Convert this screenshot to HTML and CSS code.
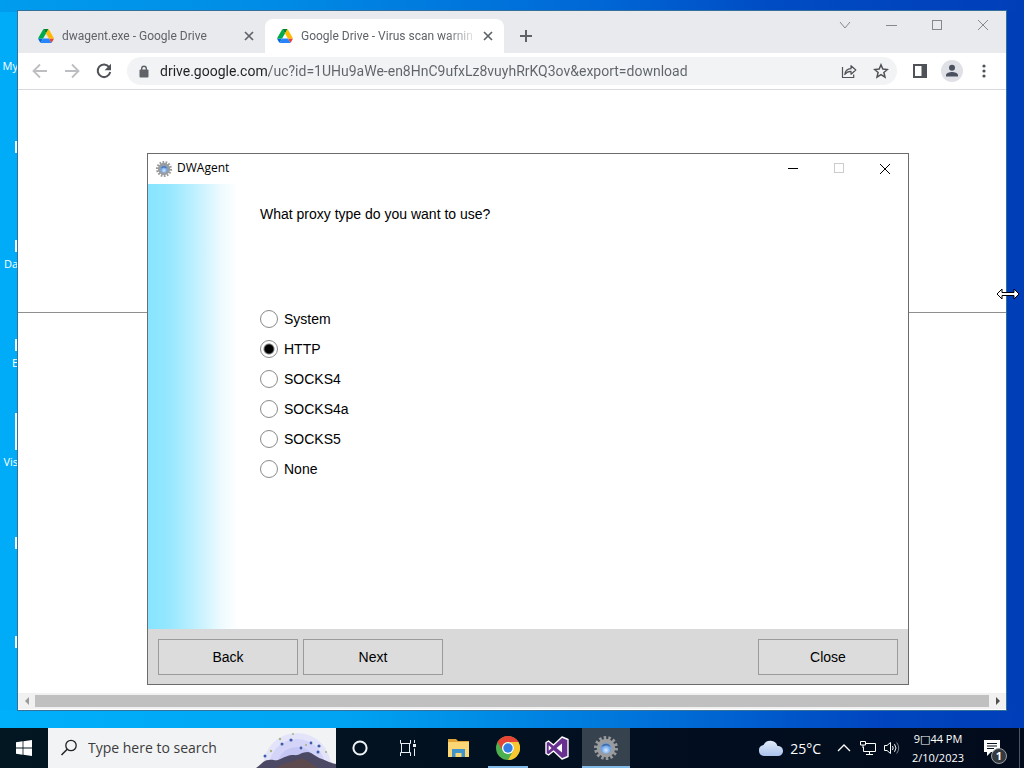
FILE: index.html
```
<!DOCTYPE html>
<html lang="en">
<head>
<meta charset="utf-8">
<title>Desktop</title>
<link rel="stylesheet" href="styles.css">
</head>
<body>
<svg class="defs" aria-hidden="true">
  <defs>
    <radialGradient id="hub" cx="50%" cy="65%" r="60%">
      <stop offset="0" stop-color="#d8eaff"/>
      <stop offset=".5" stop-color="#6aa2e6"/>
      <stop offset="1" stop-color="#8b98a8"/>
    </radialGradient>
    <linearGradient id="cloudfill" x1="0" y1="0" x2="0" y2="1">
      <stop offset="0" stop-color="#e3edfb"/>
      <stop offset="1" stop-color="#a9c1ec"/>
    </linearGradient>
    <symbol id="gear" viewBox="0 0 24 24">
      <circle cx="12" cy="12" r="10" fill="none" stroke="#98999a" stroke-width="4" pathLength="28" stroke-dasharray="1.100 .9"/>
      <circle cx="12" cy="12" r="7.400" fill="url(#hub)" stroke="#9a9c9e" stroke-width="3.600"/>
      <path d="M7.500 11a4.800 4.800 0 0 1 9 0c-2-1.600-3-1-4.500-1.800C10.500 10 9.500 9.500 7.500 11z" fill="#3f6aa8"/>
    </symbol>
    <symbol id="drive" viewBox="0 0 87.3 78">
      <path d="m6.600 66.850 3.850 6.650c.8 1.400 1.950 2.500 3.300 3.300l13.750-23.800h-27.500c0 1.550.4 3.100 1.200 4.500z" fill="#0066da"/>
      <path d="m43.650 25-13.750-23.800c-1.350.8-2.500 1.900-3.300 3.300l-25.400 44a9.060 9.060 0 0 0-1.200 4.500h27.500z" fill="#00ac47"/>
      <path d="m73.550 76.800c1.350-.8 2.500-1.900 3.300-3.300l1.600-2.750 7.650-13.250c.8-1.400 1.200-2.950 1.200-4.500h-27.500l5.850 11.500z" fill="#ea4335"/>
      <path d="m43.650 25 13.750-23.800c-1.350-.8-2.900-1.200-4.500-1.200h-18.500c-1.600 0-3.150.45-4.500 1.200z" fill="#00832d"/>
      <path d="m59.800 53h-32.300l-13.750 23.800c1.350.8 2.900 1.200 4.500 1.200h50.800c1.600 0 3.150-.45 4.500-1.200z" fill="#2684fc"/>
      <path d="m73.400 26.500-12.700-22c-.8-1.400-1.950-2.500-3.300-3.300l-13.750 23.800 16.150 28h27.450c0-1.550-.4-3.100-1.200-4.500z" fill="#ffba00"/>
    </symbol>
    <symbol id="cross" viewBox="0 0 12 12">
      <path d="M1 1l10 10M11 1L1 11" fill="none" stroke="currentColor"/>
    </symbol>
    <symbol id="tabcross" viewBox="0 0 16 16">
      <path d="M4 4l8 8M12 4l-8 8" fill="none" stroke="currentColor" stroke-width="1.700"/>
    </symbol>
  </defs>
</svg>

<div class="screen">
  <main class="desktop">
    <ul class="shortcuts" aria-label="Shortcuts">
      <li>My</li>
      <li class="marked"></li>
      <li class="marked">Da</li>
      <li class="marked">E</li>
      <li class="marked tall">Vis</li>
      <li class="marked"></li>
      <li class="marked"></li>
    </ul>

    <section class="browser" aria-label="Browser">
      <header class="tabstrip">
        <div class="tab">
          <svg class="favicon"><use href="#drive"/></svg>
          <span class="tab-title">dwagent.exe - Google Drive</span>
          <button class="tab-close" aria-label="Close tab"><svg><use href="#tabcross"/></svg></button>
        </div>
        <div class="tab active">
          <svg class="favicon"><use href="#drive"/></svg>
          <span class="tab-title">Google Drive - Virus scan warnin</span>
          <button class="tab-close" aria-label="Close tab"><svg><use href="#tabcross"/></svg></button>
        </div>
        <button class="new-tab" aria-label="New tab"><svg viewBox="0 0 14 14"><path d="M7 1v12M1 7h12" stroke="currentColor" stroke-width="2"/></svg></button>
        <div class="win-buttons">
          <button aria-label="Search tabs"><svg viewBox="0 0 12 12"><path d="M1 3l5 6 5-6" fill="none" stroke="currentColor"/></svg></button>
          <button aria-label="Minimize"><svg viewBox="0 0 12 12"><path d="M1 6.500h11" stroke="currentColor"/></svg></button>
          <button aria-label="Maximize"><svg viewBox="0 0 12 12"><rect x="1.500" y="1.500" width="9" height="9" fill="none" stroke="currentColor"/></svg></button>
          <button aria-label="Close"><svg><use href="#cross"/></svg></button>
        </div>
      </header>

      <div class="toolbar">
        <button class="tool faint" aria-label="Back"><svg viewBox="0 0 16 16"><path d="M15 8H2M8 1.500L1.500 8 8 14.500" fill="none" stroke="currentColor" stroke-width="1.800"/></svg></button>
        <button class="tool faint" aria-label="Forward"><svg viewBox="0 0 16 16"><path d="M1 8h13M8 1.500L14.500 8 8 14.500" fill="none" stroke="currentColor" stroke-width="1.800"/></svg></button>
        <button class="tool" aria-label="Reload"><svg viewBox="0 0 16 16"><path d="M13.200 4.200A6.300 6.300 0 1 0 14.200 9" fill="none" stroke="currentColor" stroke-width="2"/><path d="M15 .8v6.400H8.600z" fill="currentColor"/></svg></button>
        <div class="omnibox">
          <svg class="lock" viewBox="0 0 10 13"><path d="M2.700 5V3.500a2.300 2.300 0 0 1 4.600 0V5" fill="none" stroke="#5f6368" stroke-width="1.400"/><rect x=".5" y="4.500" width="9" height="8" rx="1" fill="#5f6368"/></svg>
          <input class="url" type="text" aria-label="Address" value="drive.google.com/uc?id=1UHu9aWe-en8HnC9ufxLz8vuyhRrKQ3ov&amp;export=download">
          <button class="tool" aria-label="Share"><svg viewBox="0 0 16 16"><path d="M1.500 4v10.500h11.200V11.500M3.800 11.500C4.200 7.800 6.500 5.900 10 5.700V2.700L14.800 7 10 11.200V8.400C7 8.400 5.300 9.400 3.800 11.500z" fill="none" stroke="currentColor" stroke-width="1.200" stroke-linejoin="round"/></svg></button>
          <button class="tool" aria-label="Bookmark"><svg viewBox="0 0 16 16"><path d="M8 1.800l1.800 4.300 4.600.4-3.500 3 1.100 4.600L8 11.700l-4 2.400 1.100-4.600-3.500-3 4.600-.4z" fill="none" stroke="currentColor" stroke-width="1.500"/></svg></button>
        </div>
        <button class="tool" aria-label="Side panel"><svg viewBox="0 0 16 16"><path d="M1 1h14v14H1zM3 3v10h6.500V3z" fill="currentColor" fill-rule="evenodd"/></svg></button>
        <button class="tool" aria-label="Profile"><svg class="avatar" viewBox="0 0 22 22"><circle cx="11" cy="11" r="11" fill="#dfe1e7"/><circle cx="11" cy="7.800" r="3" fill="#4c5160"/><path d="M5 16.600v-1.500c0-2.100 3.500-3.200 6-3.200s6 1.100 6 3.200v1.500z" fill="#4c5160"/></svg></button>
        <button class="tool" aria-label="Menu"><svg viewBox="0 0 16 16"><g fill="currentColor"><circle cx="8" cy="3" r="1.600"/><circle cx="8" cy="8" r="1.600"/><circle cx="8" cy="13" r="1.600"/></g></svg></button>
      </div>

      <div class="page"><hr class="rule"></div>

      <div class="scrollbar">
        <button class="scroll-end faint" aria-label="Scroll left"><svg viewBox="0 0 8 8"><path d="M6 0v8L2 4z" fill="currentColor"/></svg></button>
        <div class="thumb"></div>
        <button class="scroll-end" aria-label="Scroll right"><svg viewBox="0 0 8 8"><path d="M2 0v8l4-4z" fill="currentColor"/></svg></button>
      </div>
    </section>

    <section class="dialog" aria-label="DWAgent">
      <header class="dialog-bar">
        <svg class="app-icon"><use href="#gear"/></svg>
        <h1 class="dialog-title">DWAgent</h1>
        <div class="dialog-buttons">
          <button aria-label="Minimize"><svg viewBox="0 0 12 12"><path d="M1 5.500h10" stroke="currentColor"/></svg></button>
          <button class="off" aria-label="Maximize" disabled><svg viewBox="0 0 12 12"><rect x="1.500" y=".5" width="9" height="9" fill="none" stroke="currentColor"/></svg></button>
          <button aria-label="Close"><svg><use href="#cross"/></svg></button>
        </div>
      </header>
      <form class="dialog-body">
        <p class="question">What proxy type do you want to use?</p>
        <div class="options">
          <label class="option"><input type="radio" name="proxy">System</label>
          <label class="option"><input type="radio" name="proxy" checked>HTTP</label>
          <label class="option"><input type="radio" name="proxy">SOCKS4</label>
          <label class="option"><input type="radio" name="proxy">SOCKS4a</label>
          <label class="option"><input type="radio" name="proxy">SOCKS5</label>
          <label class="option"><input type="radio" name="proxy">None</label>
        </div>
      </form>
      <footer class="dialog-foot">
        <button class="action">Back</button>
        <button class="action">Next</button>
        <button class="action last">Close</button>
      </footer>
    </section>

    <svg class="pointer" viewBox="0 0 24 12" aria-hidden="true"><path d="M1 6l5-5v3.500h12V1l5 5-5 5V7.500H6V11z" fill="#fff" stroke="#000"/></svg>
  </main>

  <footer class="taskbar">
    <button class="task" aria-label="Start"><svg class="i16" viewBox="0 0 16 16"><path d="M0 2.200L6.600 1.300v6.200H0zM7.400 1.200L16 0v7.500H7.400zM0 8.400h6.600v6.300L0 13.800zM7.400 8.400H16V16l-8.600-1.200z" fill="#fff"/></svg></button>
    <div class="search">
      <svg class="lens" viewBox="0 0 18 18"><circle cx="11" cy="6.500" r="5.200" fill="none" stroke="#222" stroke-width="1.300"/><path d="M7.200 10.200L1.500 16" stroke="#222" stroke-width="1.500"/></svg>
      <input class="search-field" type="text" placeholder="Type here to search" aria-label="Search">
      <svg class="scene" viewBox="0 0 80 40" aria-hidden="true">
        <circle cx="41" cy="39" r="34" fill="#e3e4fa"/>
        <circle cx="41" cy="39" r="28" fill="#d3d4f8"/>
        <circle cx="41" cy="39" r="20" fill="#c5c6f4"/>
        <path d="M0 40c5-3 7-8 13-8 4-1 5 1 9 0 7-3 10-5 16-5 5 1 7-3 14-3 5 1 8 5 14 7 5 2 9 4 14 5v4z" fill="#4b4964"/>
        <path d="M20 40c8-6 18-6 26-10 5 3 10 5 16 10z" fill="#5d4a4e"/>
        <g fill="#3f5ca6"><circle cx="9" cy="28" r="1.500"/><circle cx="26" cy="16" r="1.500"/><circle cx="35" cy="12" r="1.600"/><circle cx="45" cy="20" r="1.400"/><circle cx="55" cy="15" r="1.400"/><circle cx="63" cy="18" r="1.600"/><circle cx="62" cy="24" r="1.500"/></g>
        <g fill="#a9b27c"><circle cx="15" cy="23" r="1.200"/><circle cx="24" cy="11" r="1.200"/><circle cx="37" cy="6" r="1"/><circle cx="70" cy="24" r="1"/><circle cx="50" cy="17" r="1"/></g>
      </svg>
    </div>
    <button class="task" aria-label="Cortana"><svg class="i16" viewBox="0 0 16 16"><circle cx="8" cy="8" r="6.600" fill="none" stroke="#eef4f8" stroke-width="2"/></svg></button>
    <button class="task" aria-label="Task view"><svg class="i16" viewBox="0 0 16 16"><path d="M.5 0v3.500h10V0M.5 16v-3.500h10V16M1.500 3.500v9M9.500 3.500v9M14.500 0v3M14.500 8.500V16" fill="none" stroke="#e8eef2"/><rect x="13" y="4" width="3" height="3" fill="#e8eef2"/></svg></button>
    <nav class="apps" aria-label="Apps">
      <button class="task" aria-label="File Explorer"><svg class="i24" viewBox="0 0 24 24"><path d="M1 3h8l2 2h11v5H1z" fill="#e0a437"/><path d="M1 6h21v15H1z" fill="#fbd675"/><path d="M5 21v-8h13v8h-3.500v-4h-6v4z" fill="#4094cc"/></svg></button>
      <button class="task running" aria-label="Chrome"><svg class="i24" viewBox="0 0 24 24"><circle cx="12" cy="12" r="12" fill="#4caf50"/><path d="M1.600 6A12 12 0 0 1 22.400 6H12a6 6 0 0 0-5.200 9z" fill="#e84435"/><path d="M22.400 6A12 12 0 0 1 12 24l5.200-9A6 6 0 0 0 12 6z" fill="#fbc72f"/><circle cx="12" cy="12" r="6" fill="#fff"/><circle cx="12" cy="12" r="4.700" fill="#347fe4"/></svg></button>
      <button class="task" aria-label="Visual Studio"><svg class="i24" viewBox="0 0 24 24"><path d="M17 1l6 2.500v17L17 23l-8.500-8L3.500 19 1 17.500v-11L3.500 5l5 4z" fill="#68318f" stroke="#fff" stroke-width="1.400" stroke-linejoin="round"/><path d="M17 7.500v9L11.500 12zM3.700 9.200v5.600L6.500 12z" fill="#fff"/></svg></button>
      <button class="task current" aria-label="DWAgent"><svg class="i24" viewBox="0 0 24 24"><use href="#gear"/></svg></button>
    </nav>
    <div class="tray">
      <button class="weather"><svg class="cloud" viewBox="0 0 26 16"><path d="M6 16a5.500 5.500 0 0 1-.5-10.900A7.500 7.500 0 0 1 19.500 6 5 5 0 0 1 20.500 16z" fill="url(#cloudfill)"/></svg>25°C</button>
      <button class="tray-item" aria-label="Hidden icons"><svg class="i16" viewBox="0 0 16 16"><path d="M2 11l6-6 6 6" fill="none" stroke="#fff" stroke-width="1.300"/></svg></button>
      <button class="tray-item" aria-label="Network"><svg class="i16" viewBox="0 0 16 16"><path d="M6 3.500h9.500v8H3.500V7M9.500 11.500v3M6 14.500h7M.5 1.500h5V5h-5zM3 5v3" fill="none" stroke="#fff"/></svg></button>
      <button class="tray-item" aria-label="Volume"><svg class="i16" viewBox="0 0 16 16"><path d="M.5 5.500h2.500L6.500 2.500v11L3 10.500H.5zM8.500 6q1.400 2 0 4M10.500 4.200q3 3.800 0 7.600" fill="none" stroke="#fff"/><path d="M12.700 2.500q4 5.500 0 11" fill="none" stroke="#7d868c"/></svg></button>
      <button class="clock"><span>9<span class="sep">□</span>44 PM</span><span>2/10/2023</span></button>
      <button class="notices" aria-label="Notifications"><svg class="note" viewBox="0 0 18 18"><path d="M1 1h16v12H8l-4 4v-4H1z" fill="#fff"/><path d="M4 4.500h10M4 7h10M4 9.500h7" stroke="#07131c"/></svg><span class="count">1</span></button>
    </div>
  </footer>
</div>
</body>
</html>
```
FILE: styles.css
```
* { box-sizing: border-box; }

body {
  margin: 0;
  font-family: "Open Sans", "Noto Sans", sans-serif;
  font-size: 12px;
  color: #000;
}

button {
  display: flex;
  align-items: center;
  justify-content: center;
  margin: 0;
  padding: 0;
  border: 0;
  background: none;
  color: inherit;
  font: inherit;
}

input { margin: 0; font: inherit; }
svg { display: block; flex: none; }
.defs { position: absolute; width: 0; height: 0; }

.screen { display: flex; flex-direction: column; height: 100vh; overflow: hidden; }

/* Desktop */
.desktop {
  position: relative;
  flex: 1;
  overflow: hidden;
  background:
    linear-gradient(90deg, #00b0fa 0%, #00a4f2 33%, #0074da 62%, #0046c0 85%, #003eb8 100%) 0 100% / 100% 18px no-repeat,
    linear-gradient(90deg, #009cee 0%, #008ce6 26%, #0068d6 58%, #004cc4 75%, #003eb8 100%) 0 0 / 100% 12px no-repeat,
    linear-gradient(90deg, #00acf8 0%, #00a8f6 10%, #0040bc 90%, #003eb8 100%);
}

.shortcuts {
  width: 18px;
  margin: 0;
  padding: 58px 0 0;
  list-style: none;
  color: #fff;
  font-size: 11px;
  line-height: 16px;
  text-align: right;
}
.shortcuts li { display: flow-root; height: 99px; white-space: nowrap; }
.shortcuts li:first-child { height: 83px; }
.shortcuts .marked::before {
  content: "";
  display: block;
  width: 3px;
  height: 12px;
  margin: 0 0 4px auto;
  background: #eef8ff;
}
.shortcuts .tall::before { height: 37px; margin-top: -25px; }

/* Browser window */
.browser {
  position: absolute;
  inset: 10px 17px 17px 17px;
  display: flex;
  flex-direction: column;
  border: 1px solid #356f9c;
  background: #fff;
}

.tabstrip {
  display: flex;
  align-items: flex-end;
  height: 42px;
  padding-left: 8px;
  background: #e8eaed;
  color: #5f6368;
}
.tab {
  display: flex;
  align-items: center;
  gap: 8px;
  flex: 0 1 239px;
  min-width: 0;
  height: 34px;
  padding: 0 8px 0 12px;
  border-radius: 8px 8px 0 0;
}
.tab.active { background: #fff; }
.favicon { width: 16px; height: 14px; }
.tab-title {
  flex: 1;
  overflow: hidden;
  white-space: nowrap;
  font-family: Roboto, "Open Sans", sans-serif;
  line-height: 20px;
  mask-image: linear-gradient(90deg, #000 85%, rgba(0, 0, 0, .2) 100%);
}
.tab-close, .tab-close svg { width: 16px; height: 16px; }
.new-tab { width: 44px; height: 34px; }
.new-tab svg { width: 14px; height: 14px; }
.win-buttons { display: flex; align-self: flex-start; margin-left: auto; color: #85888c; }
.win-buttons button { width: 46px; height: 28px; }
.win-buttons svg { width: 12px; height: 12px; }

.toolbar {
  display: flex;
  align-items: center;
  height: 37px;
  padding: 0 6px;
  border-bottom: 1px solid #d8dadd;
  color: #4f5256;
}
.tool { width: 32px; height: 28px; }
.tool svg { width: 16px; height: 16px; }
.tool .avatar { width: 22px; height: 22px; }
.faint { color: #bcbec1; }
.omnibox {
  display: flex;
  align-items: center;
  flex: 1;
  min-width: 0;
  height: 28px;
  margin: 0 7px;
  padding-left: 12px;
  border-radius: 14px;
  background: #f1f3f4;
}
.lock { width: 10px; height: 13px; }
.url {
  flex: 1;
  min-width: 0;
  height: 24px;
  padding: 0;
  margin-left: 11px;
  border: 0;
  outline: 0;
  color: #5f6368;
  font-family: Roboto, "Open Sans", sans-serif;
  font-size: 14px;
  background: linear-gradient(90deg, #202124 109px, #5f6368 109px);
  background-clip: text;
  -webkit-background-clip: text;
  -webkit-text-fill-color: transparent;
}

.page { flex: 1; }
.rule { height: 1px; margin: 222px 0 0; border: 0; background: #8f8f8f; }

.scrollbar {
  display: flex;
  height: 17px;
  padding: 2px 0;
  border-bottom: 1px solid #fff;
  background: #f1f1f1;
  color: #505050;
}
.scroll-end { width: 17px; }
.scroll-end.faint { color: #9a9a9a; }
.scroll-end svg { width: 8px; height: 8px; }
.thumb { flex: 1; background: #c0c0c0; }

/* Installer dialog */
.dialog {
  position: absolute;
  left: 147px;
  top: 153px;
  width: 762px;
  border: 1px solid #6c6c6c;
  background: #fff;
}
.dialog-bar { display: flex; align-items: center; height: 30px; padding-left: 8px; }
.app-icon { width: 16px; height: 16px; }
.dialog-title { margin: 0 auto 0 5px; font-size: 12px; font-weight: 400; line-height: 20px; padding-bottom: 2px; }
.dialog-buttons { display: flex; }
.dialog-buttons button { width: 46px; height: 28px; }
.dialog-buttons svg { width: 12px; height: 12px; }
.dialog-buttons .off { color: #ccc; }
.dialog-body {
  padding: 20px 20px 145px 112px;
  background: linear-gradient(90deg, #87e4ff 0, #94e7ff 20px, #c4f1ff 50px, #ecfafe 72px, #fff 90px);
  font-family: "Liberation Sans", Arial, sans-serif;
  font-size: 14px;
}
.question { margin: 0 0 80px; line-height: 20px; }
.options { display: flex; flex-direction: column; align-items: flex-start; }
.option { display: flex; align-items: center; gap: 6px; height: 30px; }
.option input {
  appearance: none;
  width: 18px;
  height: 18px;
  border: 1px solid #8a8a8a;
  border-radius: 50%;
  background: #fff;
}
.option input:checked { background: radial-gradient(circle, #000 4px, #fff 6px); }
.dialog-foot { display: flex; gap: 5px; padding: 10px 10px 9px; background: #d9d9d9; }
.action {
  width: 140px;
  height: 36px;
  border: 1px solid #9b9b9b;
  background: #dcdcdc;
  font-family: "Liberation Sans", Arial, sans-serif;
  font-size: 14px;
}
.action.last { margin-left: auto; }

.pointer { position: absolute; left: 996px; top: 288px; width: 24px; height: 12px; }

/* Taskbar */
.taskbar { display: flex; height: 40px; background: linear-gradient(90deg, #021722, #020f20 60%, #020b1c); color: #fff; }
.task { width: 48px; height: 40px; }
.i16 { width: 16px; height: 16px; }
.i24 { width: 24px; height: 24px; }
.search {
  display: flex;
  align-items: center;
  flex: 0 1 288px;
  min-width: 0;
  padding-left: 12px;
  background: #f2f3f4;
}
.lens { width: 18px; height: 18px; }
.search-field {
  flex: 1;
  min-width: 0;
  height: 30px;
  margin-left: 10px;
  padding: 0 0 2px;
  border: 0;
  outline: 0;
  background: none;
  font-size: 14px;
}
.search-field::placeholder { color: #3c3c3c; opacity: 1; }
.scene { width: 80px; height: 40px; }
.apps { display: flex; gap: 1px; margin-left: 3px; }
.running { background: linear-gradient(#83bbe8, #83bbe8) 50% 100% / 40px 2px no-repeat; }
.current { border-bottom: 2px solid #83bbe8; padding-top: 2px; background: #36434f; }

.tray { display: flex; align-items: center; margin-left: auto; padding-right: 4px; }
.weather { gap: 6px; height: 40px; margin-right: 11px; font-size: 14px; }
.cloud { width: 26px; height: 16px; }
.tray-item { width: 24px; height: 40px; }
.clock { flex-direction: column; width: 68px; height: 40px; font-size: 11px; line-height: 18px; }
.sep { font-family: "DejaVu Sans", sans-serif; font-size: 11px; }
.notices { position: relative; width: 48px; height: 40px; padding-right: 8px; border-right: 1px solid #4a5560; }
.note { width: 18px; height: 18px; }
.count {
  position: absolute;
  right: 12px;
  bottom: 4px;
  width: 16px;
  height: 16px;
  border: 1px solid #9aa0a5;
  border-radius: 50%;
  background: #33393e;
  font-size: 11px;
  font-weight: 700;
  line-height: 14px;
  text-align: center;
}
```
